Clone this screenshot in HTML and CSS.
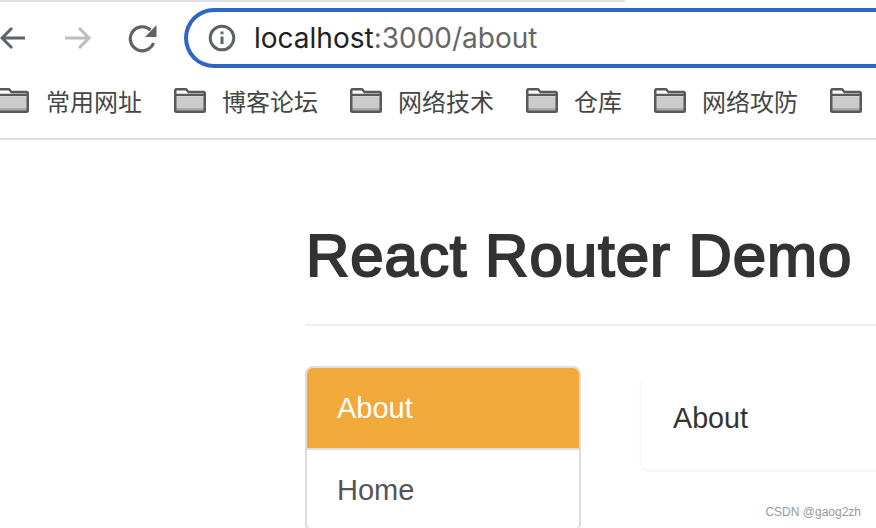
FILE: index.html
```html
<!DOCTYPE html>
<html lang="en">
<head>
    <meta charset="UTF-8">
    <meta name="viewport" content="width=device-width, initial-scale=1.0">
    <title>React Router Demo</title>
    <link rel="stylesheet" href="styles.css">
</head>
<body>
    <div class="tab-line"></div>

    <div class="toolbar">
        <svg class="nav-icon back" width="30" height="32" viewBox="2 0 30 32"><path d="M27 16H4M14 6 4 16l10 10" /></svg>
        <svg class="nav-icon forward" width="32" height="32" viewBox="0 0 32 32"><path d="M2 16h24M16 6l10 10-10 10" /></svg>
        <svg class="nav-icon reload" width="32" height="32" viewBox="0 0 32 32"><path d="M22.500 8A12 12 0 1 0 25.500 21" /><path class="fill" d="M28.500 3v12H17z" /></svg>
        <div class="url-bar">
            <svg class="info-icon" width="28" height="28" viewBox="0 0 28 28"><circle cx="14" cy="14" r="11.800" /><path d="M14 12.500v7.500M14 7.500v2.800" /></svg>
            <span class="url"><span class="host">localhost</span>:3000/about</span>
        </div>
    </div>

    <div class="bookmarks">
        <div class="bookmark">
            <svg class="folder" width="29" height="25" viewBox="3 0 29 25"><path class="bg" d="M2 9h28v11H2z" /><path class="shade" d="M2 20h28v3H2z" /><path d="M1.250 23V2.500c0-.7.500-1.250 1.250-1.250h9.500l2.500 2.750h15c.7 0 1.250.5 1.250 1.250V22.500c0 .7-.5 1.250-1.250 1.250h-27c-.7 0-1.250-.5-1.250-1.250zM1.250 7h29.500" /></svg>
            <span>常用网址</span>
        </div>
        <div class="bookmark">
            <svg class="folder" width="32" height="25" viewBox="0 0 32 25"><path class="bg" d="M2 9h28v11H2z" /><path class="shade" d="M2 20h28v3H2z" /><path d="M1.250 23V2.500c0-.7.500-1.250 1.250-1.250h9.500l2.500 2.750h15c.7 0 1.250.5 1.250 1.250V22.500c0 .7-.5 1.250-1.250 1.250h-27c-.7 0-1.250-.5-1.250-1.250zM1.250 7h29.500" /></svg>
            <span>博客论坛</span>
        </div>
        <div class="bookmark">
            <svg class="folder" width="32" height="25" viewBox="0 0 32 25"><path class="bg" d="M2 9h28v11H2z" /><path class="shade" d="M2 20h28v3H2z" /><path d="M1.250 23V2.500c0-.7.500-1.250 1.250-1.250h9.500l2.500 2.750h15c.7 0 1.250.5 1.250 1.250V22.500c0 .7-.5 1.250-1.250 1.250h-27c-.7 0-1.250-.5-1.250-1.250zM1.250 7h29.500" /></svg>
            <span>网络技术</span>
        </div>
        <div class="bookmark">
            <svg class="folder" width="32" height="25" viewBox="0 0 32 25"><path class="bg" d="M2 9h28v11H2z" /><path class="shade" d="M2 20h28v3H2z" /><path d="M1.250 23V2.500c0-.7.500-1.250 1.250-1.250h9.500l2.500 2.750h15c.7 0 1.250.5 1.250 1.250V22.500c0 .7-.5 1.250-1.250 1.250h-27c-.7 0-1.250-.5-1.250-1.250zM1.250 7h29.500" /></svg>
            <span>仓库</span>
        </div>
        <div class="bookmark">
            <svg class="folder" width="32" height="25" viewBox="0 0 32 25"><path class="bg" d="M2 9h28v11H2z" /><path class="shade" d="M2 20h28v3H2z" /><path d="M1.250 23V2.500c0-.7.500-1.250 1.250-1.250h9.500l2.500 2.750h15c.7 0 1.250.5 1.250 1.250V22.500c0 .7-.5 1.250-1.250 1.250h-27c-.7 0-1.250-.5-1.250-1.250zM1.250 7h29.500" /></svg>
            <span>网络攻防</span>
        </div>
        <div class="bookmark">
            <svg class="folder" width="32" height="25" viewBox="0 0 32 25"><path class="bg" d="M2 9h28v11H2z" /><path class="shade" d="M2 20h28v3H2z" /><path d="M1.250 23V2.500c0-.7.500-1.250 1.250-1.250h9.500l2.500 2.750h15c.7 0 1.250.5 1.250 1.250V22.500c0 .7-.5 1.250-1.250 1.250h-27c-.7 0-1.250-.5-1.250-1.250zM1.250 7h29.500" /></svg>
        </div>
    </div>

    <div class="page">
        <h1>React Router Demo</h1>
        <div class="columns">
            <div class="nav-list">
                <a class="nav-item active">About</a>
                <a class="nav-item">Home</a>
            </div>
            <div class="panel">About</div>
        </div>
    </div>

    <div class="watermark">CSDN @gaog2zh</div>
</body>
</html>
```

FILE: styles.css
```css
html, body {
    height: 100%;
}

body {
    margin: 0;
    overflow: hidden;
    position: relative;
    font-family: "Liberation Sans", "Noto Sans CJK SC", sans-serif;
    background-color: #ffffff;
}

.tab-line {
    width: 625px;
    height: 2px;
    background-color: #e0e0e4;
}

.toolbar {
    display: flex;
    align-items: center;
    height: 60px;
    margin-top: 6px;
}

.nav-icon {
    flex: none;
    fill: none;
    stroke-width: 3;
}

.nav-icon .fill {
    fill: #5f6368;
    stroke: none;
}

.back {
    stroke: #5f6368;
}

.forward {
    margin-left: 33px;
    stroke: #bcbdbe;
}

.reload {
    margin-left: 33px;
    stroke: #5f6368;
    stroke-width: 3.200;
}

/* the bar runs off the right side of the window, so it has no right edge */
.url-bar {
    flex: 1;
    display: flex;
    align-items: center;
    height: 60px;
    margin-left: 24px;
    padding-left: 20px;
    box-sizing: border-box;
    border: 4px solid #3065c8;
    border-right: none;
    border-radius: 30px 0 0 30px;
}

.info-icon {
    flex: none;
    fill: none;
    stroke: #5f6368;
    stroke-width: 3;
}

.url {
    margin-left: 18px;
    font-family: "Inter", sans-serif;
    font-size: 28px;
    color: #666666;
}

.host {
    color: #202124;
}

.bookmarks {
    display: flex;
    align-items: center;
    gap: 32px;
    height: 64px;
    padding-bottom: 6px;
    border-bottom: 2px solid #dedede;
    overflow: hidden;
}

.bookmark {
    display: flex;
    align-items: center;
    gap: 16px;
    font-size: 24px;
    color: #444746;
}

.bookmark:first-child {
    gap: 17px;
}

.folder {
    flex: none;
    margin-top: 1px;
    fill: none;
    stroke: #595959;
    stroke-width: 2.500;
}

.folder .bg {
    fill: #cccccc;
    stroke: none;
}

.folder .shade {
    fill: #aaaaaa;
    stroke: none;
}

.page {
    margin-left: 305px;
}

h1 {
    margin: 0;
    padding-top: 82px;
    padding-bottom: 34px;
    padding-left: 1px;
    font-size: 60px;
    line-height: 68px;
    font-weight: 400;
    letter-spacing: 0.950px;
    -webkit-text-stroke: 2px #333333;
    color: #333333;
    border-bottom: 2px solid #eeeeee;
}

.columns {
    display: flex;
    gap: 60px;
    margin-top: 40px;
}

.nav-list {
    flex: none;
    width: 272px;
    border: 2px solid #dddddd;
    border-radius: 8px;
}

.nav-item {
    display: block;
    height: 80px;
    padding-left: 30px;
    font-size: 29px;
    line-height: 80px;
    color: #555555;
}

.nav-item.active {
    color: #ffffff;
    background-color: #f2a93c;
    border-bottom: 2px solid #dddddd;
    border-radius: 6px 6px 0 0;
}

.panel {
    flex: 1;
    height: 94px;
    margin-top: 10px;
    padding-left: 32px;
    font-size: 28.700px;
    line-height: 84px;
    color: #333333;
    border-radius: 8px 0 0 8px;
    box-shadow: 0 1px 3px rgba(0, 0, 0, 0.08);
}

.watermark {
    position: absolute;
    right: 15px;
    bottom: 9px;
    font-size: 12px;
    color: #999999;
}
```
